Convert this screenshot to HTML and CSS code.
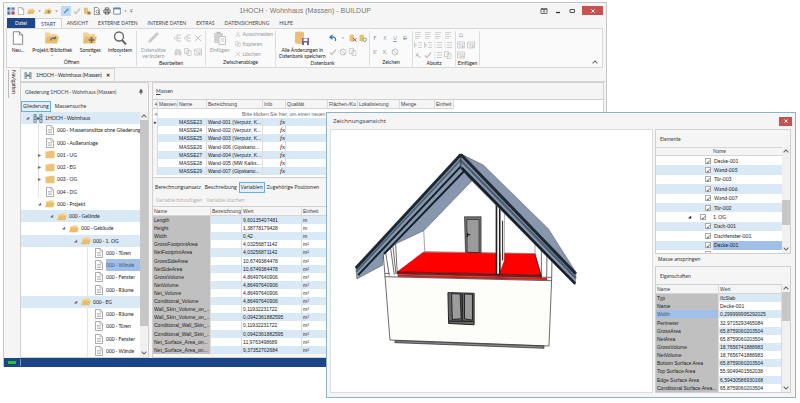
FILE: index.html
```html
<!DOCTYPE html>
<html lang="de">
<head>
<meta charset="utf-8">
<meta name="viewport" content="width=device-width, initial-scale=1">
<title>1HOCH · Wohnhaus (Massen) - BUILDUP</title>
<link rel="stylesheet" href="styles.css">
</head>
<body>
<svg class="defs" aria-hidden="true">
  <symbol id="doc" viewBox="0 0 10 13"><path d="M.7.7h5.6l3 3v8.600H.7z" fill="#fff" stroke="#777" stroke-width=".8"/><path d="M6.300.7v3h3" fill="none" stroke="#777" stroke-width=".8"/></symbol>
  <symbol id="textdoc" viewBox="0 0 8 10"><path d="M.5.5h4.700l2.300 2.300v6.700h-7z" fill="#fff" stroke="#888" stroke-width=".7"/><path d="M5 .5v2.500h2.500M2 4.500h4M2 6h4M2 7.500h4" fill="none" stroke="#999" stroke-width=".6"/></symbol>
  <symbol id="folder" viewBox="0 0 10 8"><path d="M.5 1h3l1-.7h5v7.400h-9z" fill="#eec274"/></symbol>
  <symbol id="open" viewBox="0 0 10 8"><path d="M1 7.500V1.800h2.500l.8-1H8.500v6z" fill="#f2d49c"/><path d="M0 7.700 1.800 3h8L8.300 7.700z" fill="#ebbd69"/></symbol>
  <symbol id="pen" viewBox="0 0 14 14"><path d="m2 12 1-3 8-8 2 2-8 8z" fill="#c9c9c9"/></symbol>
  <symbol id="check" viewBox="0 0 8 8"><path d="m1 4.500 2 2 4-5" fill="none" stroke="#c4c4c4" stroke-width="1.500"/></symbol>
  <symbol id="x" viewBox="0 0 8 8"><path d="m1 1 6 6m0-6L1 7" fill="none" stroke="#c4c4c4"/></symbol>
  <symbol id="cut" viewBox="0 0 8 8"><path d="m2 1 3 4.500M6 1 3 5.500" fill="none" stroke="#c4c4c4" stroke-width=".8"/><circle cx="2.200" cy="6.300" r="1" fill="none" stroke="#c4c4c4" stroke-width=".7"/><circle cx="5.800" cy="6.300" r="1" fill="none" stroke="#c4c4c4" stroke-width=".7"/></symbol>
  <symbol id="copy" viewBox="0 0 8 8"><path d="M.5.5h4v5h-4zM3 2.500h4v5H3z" fill="#fafafa" stroke="#c4c4c4" stroke-width=".8"/></symbol>
  <symbol id="lines" viewBox="0 0 8 8"><path d="M1 1.500h6M1 3.500h5M1 5.500h6M1 7.300h4" stroke="#c8c8c8" stroke-width=".8"/></symbol>
  <symbol id="list" viewBox="0 0 8 8"><path d="M3 1.500h5M3 4h5M3 6.500h5M.5 1.500h1M.5 4h1M.5 6.500h1" stroke="#c8c8c8" stroke-width=".9"/></symbol>
  <symbol id="indent" viewBox="0 0 8 8"><path d="M4 1.500h4M5 4h3M4 6.500h4M3.500 4H1m1.500-2-2 2 2 2M.5 1v6" fill="none" stroke="#c8c8c8" stroke-width=".8"/></symbol>
  <symbol id="box" viewBox="0 0 8 8"><path d="M.5 1h7v6h-7zM.5 3h7M3 3v4" fill="none" stroke="#c8c8c8" stroke-width=".8"/><circle cx="5.500" cy="5.500" r="1.300" fill="#c8c8c8"/></symbol>
  <symbol id="tree" viewBox="0 0 8 8"><path d="M7 1H3v6h4M3 4h4M1.500 2.500 0 4l1.500 1.500" fill="none" stroke="#c8c8c8" stroke-width="1"/></symbol>
  <symbol id="bino" viewBox="0 0 8 8"><path d="M2 1v2L1 4v3h2V4h2v3h2V4L6 3V1" fill="#dcdcdc" stroke="#c4c4c4" stroke-width=".8"/></symbol>
  <symbol id="no" viewBox="0 0 8 8"><circle cx="4" cy="4" r="3" fill="none" stroke="#c4c4c4"/><path d="m2 2 4 4" stroke="#c4c4c4"/></symbol>
  <symbol id="db" viewBox="0 0 8 8"><path d="M.5 1.200q2.200-1.200 4.500 0v5.600q-2.300 1.200-4.500 0z" fill="#edbf72"/></symbol>
  <symbol id="bars" viewBox="0 0 11 10"><path d="M1 .5h2.500v9H1zM7.500.5H10v9H7.500z" fill="#d4dbe0" stroke="#566" stroke-width=".7"/><path d="M1 3h2.500M1 6h2.500M7.500 3H10M7.500 6H10" stroke="#566" stroke-width=".9"/><path d="M3.500 5h4" stroke="#3a6f9a" stroke-width="1"/><path d="M4.500 3.500h2v3h-2z" fill="#3a6f9a"/></symbol>
  <symbol id="up" viewBox="0 0 6 6"><path d="m1.200 4 1.800-1.800L4.800 4" fill="none" stroke="#666" stroke-width=".8"/></symbol>
  <symbol id="down" viewBox="0 0 6 6"><path d="m1.200 2 1.800 1.800L4.800 2" fill="none" stroke="#666" stroke-width=".8"/></symbol>
  <symbol id="caret" viewBox="0 0 5 8"><path d="M1.200 3.500h2.600L2.500 4.900z" fill="#888"/></symbol>
</svg>
<main class="desktop">

<section class="window app" aria-label="BUILDUP">
  <header class="titlebar">
    <div class="quick">
      <svg viewBox="0 0 9 9"><path d="M.5.5h3.300v3.300H.500z" fill="#2c5a9a"/><path d="M5 .5h3.500v3.300H5z" fill="#4a77ad"/><path d="M.5 5h3.300v3.500H.5z" fill="#315c97"/><path d="M5 5h3.500v3.500H5z" fill="#b8434c"/><path d="M2 2h1v1H2zM6 2h1v1H6zM2 6h1v1H2z" fill="#fff"/></svg>
      <svg><use href="#doc"/></svg>
      <svg><use href="#open"/></svg><svg class="caret"><use href="#caret"/></svg>
      <svg viewBox="0 0 10 8"><use href="#open" width="10" height="8"/><path d="M6 3v4M4 5h4" stroke="#567" stroke-width=".8"/></svg><svg class="caret"><use href="#caret"/></svg>
      <button class="on" aria-label="Bearbeiten"><svg viewBox="0 0 9 9"><path d="m2 7.500.6-1.800L6.700 1.500l1 1-4.200 4.300z" fill="#4a8fc4"/></svg></button>
      <svg><use href="#check"/></svg>
      <svg viewBox="0 0 9 9"><path d="M1 1.200q2-1 4.500 0v6q-2.500 1-4.500 0z" fill="#edbf72"/><path d="M5 5h3.500v3.500H5z" fill="#b77a3c"/></svg>
      <svg viewBox="0 0 9 9"><path d="M1.500.5H5L7 2.500v6H1.500z" fill="#fff" stroke="#666" stroke-width=".8"/><circle cx="5" cy="5" r="1.600" fill="none" stroke="#666" stroke-width=".8"/><path d="m6 6 2 2.500" stroke="#666"/></svg>
      <svg viewBox="0 0 9 9"><path d="M2.500 1h4v2h-4zM1 3.500h7v3H1zM2.500 5.500h4V8h-4z" fill="#eee" stroke="#555" stroke-width=".9"/></svg>
      <svg viewBox="0 0 9 9"><path d="M.8 1h7.400v7H.8z" fill="#fff" stroke="#4c7497" stroke-width=".9"/><path d="M.8 2h7.400" stroke="#4c7497" stroke-width="1.300"/></svg><svg class="caret"><use href="#caret"/></svg>
      <svg viewBox="0 0 9 9"><path d="M0 3h3M.5 4.500h2L1.500 6z" stroke="#777" fill="#777" stroke-width=".6"/></svg>
    </div>
    <h1>1HOCH · Wohnhaus (Massen) - BUILDUP</h1>
    <div class="winbtns">
      <button aria-label="Menüband"><svg viewBox="0 0 8 8"><path d="M1 1.500h6v5H1zM1 2.500h6M4 6V3.500M3 4.500l1-1 1 1" fill="none" stroke="#555" stroke-width=".8"/></svg></button>
      <button aria-label="Minimieren"><svg viewBox="0 0 8 8"><path d="M2 5.500h4" stroke="#333" stroke-width="1.300"/></svg></button>
      <button aria-label="Maximieren"><svg viewBox="0 0 8 8"><path d="M2 2.500h4.500v3H2z" fill="none" stroke="#555" stroke-width="1"/></svg></button>
      <button class="close" aria-label="Schließen"><svg viewBox="0 0 8 8"><path d="m2.500 2.500 3 3m0-3-3 3" stroke="#fff"/></svg></button>
    </div>
  </header>

  <nav class="tabs">
    <button class="file">Datei</button><button class="current">START</button><button>ANSICHT</button><button>EXTERNE DATEN</button><button>INTERNE DATEN</button><button>EXTRAS</button><button>DATENSICHERUNG</button><button>HILFE</button>
  </nav>

  <div class="ribbon">
    <section class="group g-open">
      <div class="tools">
        <button class="big"><svg><use href="#doc"/></svg>Neu...</button>
        <button class="big drop"><svg viewBox="0 0 14 14"><path d="M0 1.500h5l1 1.500h6v9H0z" fill="#f2d49c"/><path d="m0 12.500 2-7h12l-2 7z" fill="#ebbd69"/><path d="M5.500 9.500q1-4 5-2m0 0V5.500m0 2.200H8" fill="none" stroke="#3f6f9c" stroke-width="1.300"/></svg>Projekt/Bibliothek</button>
        <button class="big drop"><svg viewBox="0 0 14 14"><path d="M0 1.500h5l1 1.500h6v9H0z" fill="#f2d49c"/><path d="m0 12.500 2-7h12l-2 7z" fill="#ebbd69"/><path d="M8.500 6v6m-3-3h6" stroke="#5a6d80" stroke-width="1.500"/></svg>Sonstiges</button>
        <button class="big drop"><svg viewBox="0 0 14 14"><circle cx="6" cy="5.500" r="4.500" fill="none" stroke="#666" stroke-width="1.300"/><path d="m9 9 4 4.500" stroke="#666" stroke-width="2"/></svg>Infosystem</button>
      </div>
      <h2>Öffnen</h2>
    </section>
    <section class="group g-edit">
      <div class="tools">
        <button class="big off"><svg><use href="#pen"/></svg>Datensätze<br>verändern</button>
        <div class="icons three"><svg><use href="#tree"/></svg><svg><use href="#tree"/></svg><svg><use href="#x"/></svg><svg><use href="#bino"/></svg><svg><use href="#copy"/></svg><svg><use href="#box"/></svg></div>
      </div>
      <h2>Bearbeiten</h2>
    </section>
    <section class="group g-clip">
      <div class="tools">
        <button class="big off"><svg viewBox="0 0 14 14"><path d="M1 2h9v10H1z" fill="#d2d2d2"/><path d="M3.500.8h4v2h-4z" fill="#bbb"/><path d="M6 5.500h6.500v8H6z" fill="#fafafa" stroke="#c4c4c4"/><path d="M8 8h3M8 10h3" stroke="#ccc"/></svg>Einfügen</button>
        <div class="stack"><button><svg><use href="#cut"/></svg>Ausschneiden</button><button><svg><use href="#copy"/></svg>Kopieren</button><button><svg><use href="#x"/></svg>Löschen</button></div>
      </div>
      <h2>Zwischenablage</h2>
    </section>
    <section class="group g-data">
      <div class="tools">
        <button class="big"><svg viewBox="0 0 14 14"><path d="M0 1.500q4.500-2 9 0v10.500q-4.500 2-9 0z" fill="#edbf72"/><path d="M7 7h7v7H7z" fill="#7d5a9a"/><path d="M8.500 7.500h4V10h-4zM9 11.500h3V14H9z" fill="#fff"/></svg>Alle Änderungen in<br>Datenbank speichern</button>
        <div class="icons four">
          <svg viewBox="0 0 8 8"><path d="M3.500 1 1 3.200l2.500 2M1 3.200h3.500q2.500.3 2 3.800" fill="none" stroke="#3d70a8" stroke-width="1.200"/></svg>
          <svg viewBox="0 0 8 8"><path d="M3 3.500h2L4 4.800z" fill="#777"/></svg>
          <svg viewBox="0 0 8 8"><use href="#db" width="8" height="8"/><path d="m4 4 3.500 3.500m0-3.500L4 7.500" stroke="#c24a3a"/></svg>
          <svg viewBox="0 0 8 8"><use href="#db" width="8" height="8"/><circle cx="5.700" cy="5.700" r="1.700" fill="#fff" stroke="#5c9a62" stroke-width=".9"/></svg>
          <svg><use href="#check"/></svg><svg><use href="#no"/></svg><svg><use href="#copy"/></svg>
        </div>
      </div>
      <h2>Datenbank</h2>
    </section>
    <section class="group g-char">
      <div class="tools"><div class="icons four"><b>F</b><i>K</i><u>U</u><s>D</s><span>X'</span><span>X,</span><svg><use href="#no"/></svg></div></div>
      <h2>Zeichen</h2>
    </section>
    <section class="group g-para">
      <div class="tools"><div class="icons four tight">
        <svg><use href="#lines"/></svg><svg><use href="#lines"/></svg><svg><use href="#lines"/></svg><svg><use href="#lines"/></svg>
        <svg><use href="#indent"/></svg><svg><use href="#indent"/></svg><svg><use href="#list"/></svg><svg><use href="#list"/></svg>
        <span>A₂</span><svg><use href="#check"/></svg><svg><use href="#list"/></svg><svg><use href="#copy"/></svg>
      </div></div>
      <h2>Absatz</h2>
    </section>
    <section class="group g-insert">
      <div class="tools"><div class="icons two tight"><span>Ω</span><span></span><svg><use href="#box"/></svg><svg><use href="#box"/></svg><svg><use href="#box"/></svg></div></div>
      <h2>Einfügen</h2>
    </section>
    <button class="collapse" aria-label="Menüband reduzieren"><svg><use href="#up"/></svg></button>
  </div>

  <div class="workspace">
    <aside class="navrail"><span>Navigation</span></aside>
    <div class="pages">
      <div class="pagetabs"><button><svg><use href="#bars"/></svg>1HOCH · Wohnhaus (Massen)<b>✕</b></button></div>
      <div class="split">
        <section class="panel outline">
          <h2 class="panelhead">Gliederung 1HOCH · Wohnhaus (Massen)<svg viewBox="0 0 6 6"><path d="M2 .8h2v2.400H2zM1 3.200h4M3 3.200v2.500" fill="#888" stroke="#555" stroke-width=".7"/></svg></h2>
          <div class="subtabs"><button class="current">Gliederung</button><button>Massensuche</button></div>
          <div class="scroller">
            <ul class="tree">
              <li class="l1 tint open"><svg><use href="#bars"/></svg><span>1HOCH · Wohnhaus</span></li>
              <li class="l2"><svg class="d"><use href="#textdoc"/></svg><span>000 · Massenansätze ohne Gliederung</span></li>
              <li class="l2"><svg class="d"><use href="#textdoc"/></svg><span>000 · Außenanlage</span></li>
              <li class="l2 shut"><svg><use href="#folder"/></svg><span>001 · UG</span></li>
              <li class="l2 shut"><svg><use href="#folder"/></svg><span>002 · EG</span></li>
              <li class="l2 shut"><svg><use href="#folder"/></svg><span>003 · OG</span></li>
              <li class="l2"><svg class="d"><use href="#textdoc"/></svg><span>004 · DG</span></li>
              <li class="l2 open"><svg><use href="#open"/></svg><span>000 · Projekt</span></li>
              <li class="l3 tint open"><svg><use href="#open"/></svg><span>000 · Gelände</span></li>
              <li class="l4 open"><svg><use href="#open"/></svg><span>000 · Gebäude</span></li>
              <li class="l5 tint open"><svg><use href="#open"/></svg><span>000 · 1. OG</span></li>
              <li class="l6"><svg class="d"><use href="#textdoc"/></svg><span>000 · Türen</span></li>
              <li class="l6 chosen"><svg class="d"><use href="#textdoc"/></svg><span>000 · Wände</span></li>
              <li class="l6"><svg class="d"><use href="#textdoc"/></svg><span>000 · Fenster</span></li>
              <li class="l6"><svg class="d"><use href="#textdoc"/></svg><span>000 · Räume</span></li>
              <li class="l5 tint open"><svg><use href="#open"/></svg><span>000 · EG</span></li>
              <li class="l6"><svg class="d"><use href="#textdoc"/></svg><span>000 · Räume</span></li>
              <li class="l6"><svg class="d"><use href="#textdoc"/></svg><span>000 · Türen</span></li>
              <li class="l6"><svg class="d"><use href="#textdoc"/></svg><span>000 · Fenster</span></li>
              <li class="l6"><svg class="d"><use href="#textdoc"/></svg><span>000 · Wände</span></li>
            </ul>
            <div class="bar"><svg><use href="#up"/></svg><i class="thumb tall"></i><svg><use href="#down"/></svg></div>
          </div>
        </section>

        <section class="panel masses">
          <h2 class="panelhead"><span><u>M</u>assen</span></h2>
          <div class="sheet">
            <table class="grid upper">
              <colgroup><col class="c-mark"><col class="c-mass"><col class="c-name"><col class="c-desc"><col class="c-info"><col class="c-qual"><col class="c-area"><col class="c-loc"><col class="c-qty"><col class="c-unit"></colgroup>
              <thead><tr><th>✳</th><th>Massen-</th><th>Name</th><th>Bezeichnung</th><th>Info</th><th>Qualität</th><th>Flächen-/Ku</th><th>Lokalisierung</th><th>Menge</th><th>Einheit</th></tr></thead>
              <tbody>
                <tr class="fresh"><td>✳</td><td colspan="9">Bitte klicken Sie hier, um einen neuen Datensatz anzufügen</td></tr>
                <tr><td>▸</td><td></td><td>MASSE23</td><td>Wand-001 (Verputz, K...</td><td class="fx">fx</td><td></td><td></td><td></td><td></td><td></td></tr>
                <tr><td></td><td></td><td>MASSE24</td><td>Wand-002 (Verputz, K...</td><td class="fx">fx</td><td></td><td></td><td></td><td></td><td></td></tr>
                <tr><td></td><td></td><td>MASSE25</td><td>Wand-003 (Verputz, K...</td><td class="fx">fx</td><td></td><td></td><td></td><td></td><td></td></tr>
                <tr><td></td><td></td><td>MASSE26</td><td>Wand-006 (Gipskarto...</td><td class="fx">fx</td><td></td><td></td><td></td><td></td><td></td></tr>
                <tr><td></td><td></td><td>MASSE27</td><td>Wand-004 (Verputz, K...</td><td class="fx">fx</td><td></td><td></td><td></td><td></td><td></td></tr>
                <tr><td></td><td></td><td>MASSE28</td><td>Wand-005 (MW Kalks...</td><td class="fx">fx</td><td></td><td></td><td></td><td></td><td></td></tr>
                <tr><td></td><td></td><td>MASSE29</td><td>Wand-007 (Gipskarto...</td><td class="fx">fx</td><td></td><td></td><td></td><td></td><td></td></tr>
              </tbody>
            </table>
          </div>
          <div class="subtabs detail"><button>Berechnungsansatz</button><button>Beschreibung</button><button class="current">Variablen</button><button>Zugehörige Positionen</button></div>
          <div class="actions"><button disabled>Variable hinzufügen</button><button disabled>Variable löschen</button></div>
          <table class="grid vars">
            <colgroup><col class="v-name"><col class="v-desc"><col class="v-value"><col></colgroup>
            <thead><tr><th>Name</th><th>Bezeichnung</th><th>Wert</th><th>Einheit</th></tr></thead>
            <tbody>
              <tr><th>Length</th><td></td><td>9,60135407481</td><td>m</td></tr>
              <tr><th>Height</th><td></td><td>1,38778179428</td><td>m</td></tr>
              <tr><th>Width</th><td></td><td>0,42</td><td>m</td></tr>
              <tr><th>GrossFootprintArea</th><td></td><td>4,03256871142</td><td>m²</td></tr>
              <tr><th>NetFootprintArea</th><td></td><td>4,03256871142</td><td>m²</td></tr>
              <tr><th>GrossSideArea</th><td></td><td>10,6749384478</td><td>m²</td></tr>
              <tr><th>NetSideArea</th><td></td><td>10,6749384478</td><td>m²</td></tr>
              <tr><th>GrossVolume</th><td></td><td>4,86497640906</td><td>m³</td></tr>
              <tr><th>NetVolume</th><td></td><td>4,86497640906</td><td>m³</td></tr>
              <tr><th>Net_Volume</th><td></td><td>4,86497640906</td><td>m³</td></tr>
              <tr><th>Conditional_Volume</th><td></td><td>4,86497640906</td><td>m³</td></tr>
              <tr><th>Wall_Skin_Volume_on_...</th><td></td><td>0,11932231722</td><td>m³</td></tr>
              <tr><th>Wall_Skin_Volume_on_...</th><td></td><td>0,0942361882595</td><td>m³</td></tr>
              <tr><th>Conditional_Wall_Skin_...</th><td></td><td>0,11932231722</td><td>m³</td></tr>
              <tr><th>Conditional_Wall_Skin_...</th><td></td><td>0,0942361882595</td><td>m³</td></tr>
              <tr><th>Net_Surface_Area_on...</th><td></td><td>11,9763498689</td><td>m²</td></tr>
              <tr><th>Net_Surface_Area_on...</th><td></td><td>9,37352702684</td><td>m²</td></tr>
            </tbody>
          </table>
        </section>
      </div>
    </div>
  </div>
  <footer class="status"><i></i></footer>
</section>

<section class="window dialog" aria-label="Zeichnungsansicht">
  <header class="dialoghead"><h1>Zeichnungsansicht</h1><button class="close" aria-label="Schließen"><svg viewBox="0 0 8 8"><path d="m2.500 2.500 3 3m0-3-3 3" stroke="#fff"/></svg></button></header>
  <div class="dialogbody">
    <figure class="drawing">
      <svg viewBox="-30 -3 969 789" role="img" aria-label="3D-Ansicht des Hauses">
        <g stroke="#222" stroke-width="2" stroke-linejoin="round">
          <path d="M133 436 148 630 628 648 636 448z" fill="#fdfdfa"/>
          <path d="M163 632v6l450 17v-7z" fill="#888"/>
          <path d="M128 372 165 340 250 300 395 150 600 345 637 385 636 450 133 438z" fill="#fff" stroke="none"/>
          <path d="M250 300 253 364M586 335v36M253 363 587 369" fill="none" stroke="#777"/>
          <path d="M373 258h50v109l-47-2z" fill="#777"/>
          <path d="M380 266h37v100l-36-1z" fill="#9b9b9b"/>
          <path d="M382 307v12M382 312h8" stroke-width="4"/>
          <path d="M248 365 586 370 605 434 170 424z" fill="#f00" stroke="#900" stroke-width="1"/>
          <path d="M170 424 605 434v7L170 431z" fill="#a01010"/>
          <path d="M172 433 622 443v6L172 438z" fill="#e02020" stroke="#800" stroke-width="1"/>
          <path d="M128 372 133 438M135 366 146 436M150 353 161 433M157 347 166 431M165 340 170 430M133 429H146M133 439 636 451M605 355v83M622 370 621 440M637 388 636 450M586 371 603 433M600 440 636 441" fill="none"/>
          <path d="M468 218V431H480V232z" fill="#fff"/>
          <path d="M470 220V432M479 228V432" stroke-width="4"/>
          <path d="M494 244 493 390 482 422V233z" fill="#fff" stroke-width="1"/>
          <path d="M488 270V390" stroke-width="3"/>
          <path d="M323 487 402 489V584L325 580z" fill="#666" stroke-width="3"/>
          <path d="M334 490 360 491 363 566 336 568zM373 491 397 492V570L373 566z" fill="#9c9c9c" stroke-width="3"/>
          <path d="M366 490V572M327 573 401 574" stroke-width="4"/>
          <path d="M362 68 45 412 48 446 126 404 128 374 165 340 250 300 395 150 362 105z" fill="#8798ae" stroke-width="1"/>
          <path d="M362 68 430 102 626 294 710 426 707 463 395 150 362 112z" fill="#8798ae" stroke-width="1"/>
          <path d="M362 70 45 413" stroke="#1d2832" stroke-width="9"/>
          <path d="M362 86 46 424" stroke="#4b5d70" stroke-width="5"/>
          <path d="M362 106 52 434M372 120 130 370" fill="none" stroke="#17202a" stroke-width="6"/>
          <path d="M362 70 709 430" stroke="#1d2832" stroke-width="9"/>
          <path d="M362 88 709 443" stroke="#4b5d70" stroke-width="7"/>
          <path d="M364 110 707 460" stroke="#17202a" stroke-width="8"/>
          <path d="M362 74v36M395 149l-24-30" fill="none"/>
        </g>
      </svg>
    </figure>
    <aside class="side">
      <section class="panel elements">
        <h2 class="panelhead">Elemente</h2>
        <div class="scroller">
          <div class="checks">
            <div class="checkhead">Name</div>
            <label><input type="checkbox" checked>Decke-001</label>
            <label><input type="checkbox" checked>Wand-005</label>
            <label><input type="checkbox" checked>Tür-003</label>
            <label><input type="checkbox" checked>Wand-006</label>
            <label><input type="checkbox" checked>Wand-007</label>
            <label><input type="checkbox" checked>Tür-002</label>
            <label class="parent"><input type="checkbox" checked>1. OG</label>
            <label><input type="checkbox" checked>Dach-001</label>
            <label><input type="checkbox" checked>Dachfenster-001</label>
            <label class="picked"><input type="checkbox" checked><span>Decke-001</span></label>
            <div class="peek"></div>
          </div>
          <div class="bar"><svg><use href="#up"/></svg><i class="thumb mid"></i><svg><use href="#down"/></svg></div>
        </div>
      </section>
      <button class="jump">Masse anspringen</button>
      <section class="panel props">
        <h2 class="panelhead">Eigenschaften</h2>
        <div class="scroller">
          <table class="grid">
            <colgroup><col class="p-name"><col></colgroup>
            <thead><tr><th>Name</th><th>Wert</th></tr></thead>
            <tbody>
              <tr><th>Typ</th><td>IfcSlab</td></tr>
              <tr><th>Name</th><td>Decke-001</td></tr>
              <tr class="picked"><th>Width</th><td>0,299999995292025</td></tr>
              <tr><th>Perimeter</th><td>32,9715293465084</td></tr>
              <tr><th>GrossArea</th><td>65,8759060203504</td></tr>
              <tr><th>NetArea</th><td>65,8759060203504</td></tr>
              <tr><th>GrossVolume</th><td>18,7656741888983</td></tr>
              <tr><th>NetVolume</th><td>18,7656741888983</td></tr>
              <tr><th>Bottom Surface Area</th><td>65,8759060203504</td></tr>
              <tr><th>Top Surface Area</th><td>55,9049401562038</td></tr>
              <tr><th>Edge Surface Area</th><td>6,59430586930168</td></tr>
              <tr><th>Conditional Surface Area...</th><td>65,8759060203504</td></tr>
            </tbody>
          </table>
          <div class="bar"><svg><use href="#up"/></svg><i class="thumb low"></i><svg><use href="#down"/></svg></div>
        </div>
      </section>
    </aside>
  </div>
</section>
</main>
</body>
</html>
```
FILE: styles.css
```css
* { box-sizing: border-box; }
body { margin: 0; background: #fff; color: #222; font: 5px/8px Lato, "Liberation Sans", sans-serif; }
h1, h2, ul, figure { margin: 0; padding: 0; font: inherit; list-style: none; }
button { margin: 0; padding: 0; border: 0; background: none; color: inherit; font: inherit; white-space: nowrap; }
svg { display: block; flex: none; }
.defs { position: absolute; width: 0; height: 0; }
.desktop { position: relative; min-height: 100vh; overflow: hidden; }
.window { position: absolute; background: #f5f5f5; }

/* main window */
.app { left: 3px; top: 2px; width: 75.5%; border: 1px solid #c6c6c6; border-bottom: 0; }
.titlebar { display: grid; grid-template-columns: 1fr auto 1fr; align-items: center; height: 15px; padding: 0 3px; }
.titlebar h1 { font: 7px/10px "Liberation Sans", Arial, sans-serif; color: #777; }
.quick { display: flex; align-items: center; gap: 2px; }
.quick svg { width: 8px; height: 8px; }
.quick .caret { width: 5px; }
.quick .on { background: #bfdcf0; padding: 1px; }
.winbtns { display: flex; justify-content: flex-end; gap: 6px; }
.winbtns svg { width: 8px; height: 8px; }
.close { display: flex; justify-content: center; align-items: center; width: 21px; height: 9px; background: #c75050; }
.close svg { width: 8px; height: 8px; }

.tabs { display: flex; height: 10px; padding: 0 3px; color: #444; }
.tabs button { padding: 0 5px; }
.tabs .file { width: 28px; padding: 0; background: #1c478a; color: #fff; }
.tabs .current { border: 1px solid #d5d5d5; border-bottom: 0; background: #fafafa; color: #1c478a; }

.ribbon { display: flex; height: 40px; margin: 0 3px 0 2px; border: 1px solid #d8d8d8; background: #fafafa; }
.group { display: flex; flex-direction: column; justify-content: space-between; margin: 2px 0 1px; border-right: 1px solid #ddd; text-align: center; }
.tools { display: flex; justify-content: space-between; line-height: 6px; }
.big { display: flex; flex-direction: column; align-items: center; line-height: 6px; }
.big svg { width: 14px; height: 14px; margin-bottom: 2px; }
.drop::after { content: ""; margin-top: 2px; border: 1px solid transparent; border-top-color: #777; }
.off, .stack, .icons { color: #999; }
.icons { display: grid; align-content: start; row-gap: 6px; padding-top: 3px; }
.icons.tight { row-gap: 2px; padding-top: 0; }
.icons > * { width: 8px; height: 8px; line-height: 8px; justify-self: center; }
.three { grid-template-columns: repeat(3, 10px); }
.four { grid-template-columns: repeat(4, 10px); }
.two { grid-template-columns: repeat(2, 10px); }
.stack { display: flex; flex-direction: column; gap: 4px; }
.stack button { display: flex; gap: 2px; line-height: 6px; }
.stack svg { width: 6px; height: 6px; }
.g-open { width: 130px; }
.g-open .tools { padding: 0 4px; }
.g-edit { width: 69px; }
.g-edit .tools { padding: 0 2px 0 4px; }
.g-clip { width: 70px; }
.g-clip .tools { padding: 0 2px 0 4px; }
.g-data { width: 94px; }
.g-data .tools { padding: 0 1px 0 3px; }
.g-char { width: 43px; }
.g-para { width: 43px; }
.g-insert { width: 24px; }
.collapse { margin: auto 3px 1px auto; }
.collapse svg { width: 8px; height: 8px; }

.workspace { display: flex; }
.navrail { width: 16px; padding: 2px 4px; }
.navrail span { display: block; height: 28px; border-left: 1px solid #bbb; writing-mode: vertical-rl; line-height: 10px; }
.pages { flex: 1; min-width: 0; }
.pagetabs { display: flex; height: 14px; border-bottom: 1px solid #d5d5d5; }
.pagetabs button { display: flex; align-items: center; gap: 4px; padding: 0 4px 0 3px; border: 1px solid #d5d5d5; border-bottom: 0; }
.pagetabs svg { width: 8px; height: 7px; }
.split { display: flex; gap: 3px; height: 276px; }
.panel { display: flex; flex-direction: column; border: 1px solid #d0d0d0; }
.outline { width: 129px; }
.masses { flex: 1; min-width: 0; margin-right: 2px; }
.panelhead { display: flex; justify-content: space-between; align-items: center; flex: none; height: 17px; padding: 0 4px; color: #444; }
.panelhead svg { width: 6px; height: 6px; }
.masses .panelhead { height: 16px; padding: 0 3px; }
.subtabs { display: flex; flex: none; height: 12px; gap: 2px; align-items: center; font-family: "Open Sans", sans-serif; }
.subtabs button { height: 11px; padding: 0 1px; border: 1px solid transparent; }
.subtabs .current { border-color: #66b0dc; background: #e3f0f9; }

.scroller { display: flex; flex: 1; min-height: 0; background: #fff; }
.bar { display: flex; flex-direction: column; width: 8px; background: #f0f0f0; }
.bar svg { width: 8px; height: 8px; }
.thumb { width: 8px; background: #c6c6c6; }
.tall { height: 84%; margin-bottom: auto; }
.mid { height: 24%; margin: auto 0 20px; }
.low { height: 27%; margin-bottom: auto; }

.tree { display: grid; grid-auto-rows: 1fr; flex: 1; min-width: 0; }
.tree li { display: flex; align-items: center; overflow: hidden; white-space: nowrap; }
.tree svg { width: 10px; height: 9px; margin-right: 2px; }
.tree .d { height: 10px; }
.tree li::before { content: ""; flex: none; width: 12px; font-size: 4px; text-align: center; color: #666; align-self: stretch; line-height: 12px; background: linear-gradient(#e4e4e4, #e4e4e4) 5px 0 / 1px 100% no-repeat; }
.tree .open::before { content: "◢"; background: none; }
.tree .shut::before { content: "▸"; font-size: 6px; }
.tint { background: #d9e9f5; }
.l2 { padding-left: 12px; }
.l3 { padding-left: 24px; }
.l4 { padding-left: 36px; }
.l5 { padding-left: 48px; }
.l6 { padding-left: 61px; }
.chosen span { flex: 1; line-height: 12px; background: #a0c0ea; color: #456; }

/* data grids */
.grid { width: 100%; table-layout: fixed; border-collapse: separate; border-spacing: 0; background: #fff; text-align: left; font-family: "Liberation Sans", Arial, sans-serif; }
.grid th, .grid td { height: 8px; padding: 0 0 0 1px; overflow: hidden; border-right: 1px solid #dcdcdc; font-weight: normal; white-space: nowrap; }
.grid thead th { height: 9px; background: #f5f5f5; border-bottom: 1px solid #d5d5d5; color: #444; }
.grid tbody tr:nth-child(odd) td { background: #d9e9f5; }
.grid tbody th { background: #c0c0c0; }
.sheet { height: 79px; flex: none; background: #fff; border-top: 1px solid #d0d0d0; border-bottom: 1px solid #d0d0d0; }
.upper { width: 301px; height: 75px; }
.upper tbody tr:nth-child(even) td { background: #d9e9f5; }
.upper tbody tr:nth-child(odd) td { background: #fff; }
.upper tbody tr td:first-child { background: #f5f5f5; }
.grid.upper .fresh td { height: 9px; background: #fff; color: #666; }
.grid.upper .fresh td:last-child { padding-left: 84px; }
.upper tbody td:nth-child(2) { border-right-color: transparent; }
.upper .fx { text-align: right; font: italic 7px/8px "Liberation Serif", serif; }
.c-mark { width: 5px; }
.c-mass { width: 20px; }
.c-name { width: 29px; }
.c-desc { width: 56px; }
.c-info { width: 23px; }
.c-qual { width: 42px; }
.c-area { width: 30px; }
.c-loc { width: 42px; }
.c-qty { width: 35px; }
.detail { margin-top: 3px; gap: 0; }
.actions { display: flex; flex: none; gap: 4px; height: 13px; align-items: center; padding: 0 3px; font-family: "Open Sans", sans-serif; }
.actions button { color: #aaa; }
.vars { flex: none; height: 148px; border-top: 1px solid #d0d0d0; }
.v-name { width: 58px; }
.v-desc { width: 31px; }
.v-value { width: 60px; }

.status { display: flex; align-items: center; height: 9px; background: #1c4587; }
.status i { width: 13px; height: 7px; margin-left: 4px; border-right: 1px solid #7d97bd; background: linear-gradient(#25c435, #25c435) 0 2px / 8px 3px no-repeat; }

/* drawing window */
.dialog { left: 326px; right: 4px; top: 112px; border: 1px solid #8fb3c6; }
.dialoghead { display: flex; justify-content: space-between; align-items: center; height: 16px; padding: 0 3px 0 6px; }
.dialoghead h1 { font: 6px/10px "Noto Sans", sans-serif; color: #444; }
.dialoghead .close { width: 13px; }
.dialogbody { display: flex; gap: 2px; height: 264px; margin: 0 4px 4px 3px; }
.drawing { flex: 1; min-width: 0; border: 1px solid #ddd; background: #fff; }
.drawing svg { width: 100%; height: 100%; }
.side { display: flex; flex-direction: column; width: 136px; }
.elements { height: 125px; }
.checks { display: grid; grid-template-rows: 9px repeat(10, 1fr) 3px; flex: 1; }
.checkhead { padding-left: 57px; border: 1px solid #d5d5d5; border-width: 1px 0; background: #f5f5f5; line-height: 7px; color: #444; }
.checks label { display: flex; align-items: center; gap: 3px; padding-left: 49px; }
.checks label:nth-child(odd) { background: #d9e9f5; }
.checks label.parent { padding-left: 44px; gap: 7px; background: #fff; }
.checks .parent::before { content: "◢"; width: 0; font-size: 4px; text-indent: -12px; margin-right: -7px; }
.checks label.picked:nth-child(n) { background: linear-gradient(90deg, #d9e9f5 57px, #a0c0ea 57px); }
.peek { width: 6px; height: 2px; margin: 1px 0 0 49px; border: 1px solid #d2a28a; border-bottom: 0; }
input { appearance: none; display: grid; place-items: center; width: 6px; height: 6px; margin: 0; border: 1px solid #aaa; background: #fff; }
input:checked::after { content: "✓"; font: bold 6px/6px "DejaVu Sans", sans-serif; color: #222; }
.jump { height: 12px; padding: 0 3px 2px; text-align: left; font-family: "Open Sans", sans-serif; }
.props { flex: 1; min-height: 0; }
.props .grid { flex: 1; border-top: 1px solid #d0d0d0; }
.p-name { width: 63px; }
.grid .picked th { background: #a0c0ea; color: #456; }
```
